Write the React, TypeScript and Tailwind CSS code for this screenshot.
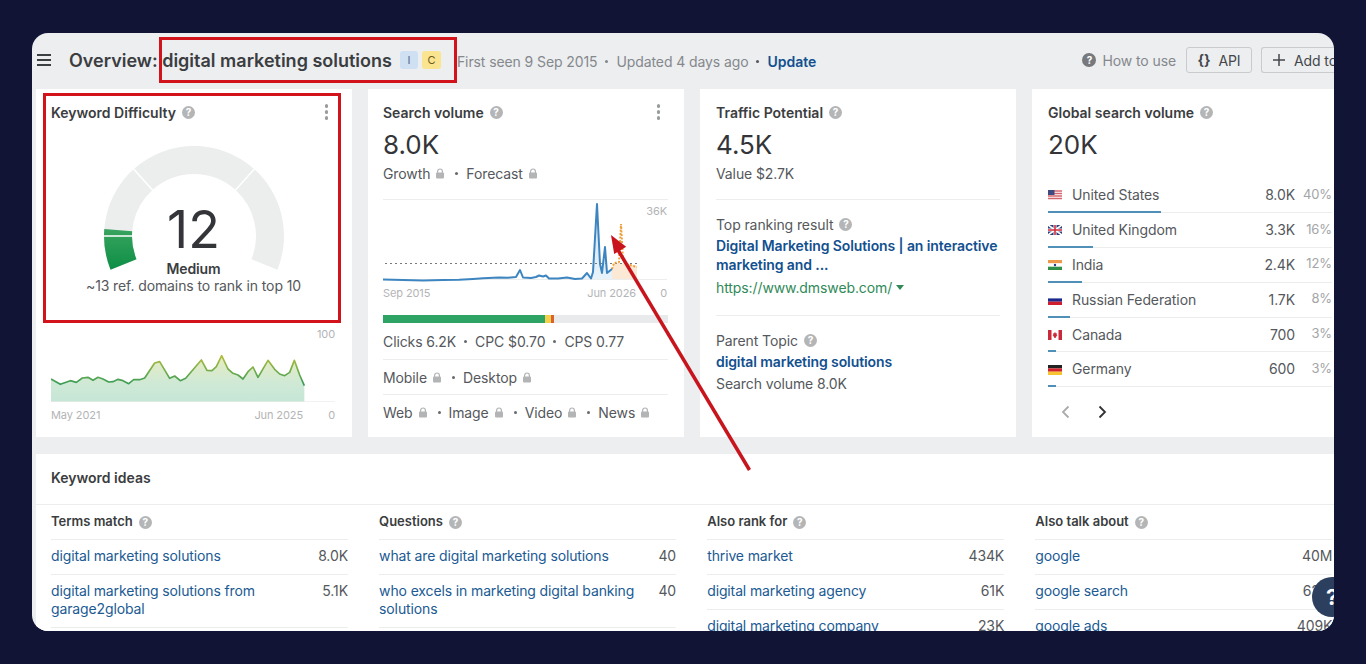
import React from "react";

const pol = (r: number, a: number, cx = 100, cy = 113) => {
  const t = (a * Math.PI) / 180;
  return `${(cx + r * Math.cos(t)).toFixed(2)} ${(cy - r * Math.sin(t)).toFixed(2)}`;
};
const seg = (a1: number, a2: number, R = 90, r = 62) =>
  `M${pol(R, a1)} A${R} ${R} 0 0 1 ${pol(R, a2)} L${pol(r, a2)} A${r} ${r} 0 0 0 ${pol(r, a1)} Z`;

const Help = ({ c = "bg-[#b4b5b6]" }: { c?: string }) => (
  <span className={`ml-[6px] inline-flex h-[13px] w-[13px] shrink-0 items-center justify-center rounded-full ${c} text-[10px] font-bold leading-none text-white`}>?</span>
);

const Lock = () => (
  <svg width="10" height="11" viewBox="0 0 10 11" className="mx-[5px] shrink-0">
    <path d="M2.6 5V3.4a2.4 2.4 0 0 1 4.8 0V5" fill="none" stroke="#b3b4b6" strokeWidth="1.2" />
    <rect x="1" y="4.6" width="8" height="6" rx="1" fill="#b3b4b6" />
  </svg>
);

const Dot = ({ cls = "mx-[8px] bg-[#66696d]" }: { cls?: string }) => <span className={`${cls} h-[3px] w-[3px] shrink-0 rounded-full`} />;

const Dots = () => (
  <span className="ml-auto mr-[8px] flex flex-col gap-[2.500px]">
    <i className="h-[3.500px] w-[3.500px] rounded-full bg-[#9a9b9d]" />
    <i className="h-[3.500px] w-[3.500px] rounded-full bg-[#9a9b9d]" />
    <i className="h-[3.500px] w-[3.500px] rounded-full bg-[#9a9b9d]" />
  </span>
);

const Title = ({ children, menu }: { children: React.ReactNode; menu?: boolean }) => (
  <div className="flex h-5 items-center text-[14px] font-semibold tracking-normal text-[#3b3d40]">
    {children}
    <Help />
    {menu && <Dots />}
  </div>
);

const Big = ({ children }: { children: React.ReactNode }) => (
  <div className="h-[41px] text-[26px] font-normal leading-[46px] tracking-normal text-[#333538]">{children}</div>
);

const flags: Record<string, React.ReactNode> = {
  us: (
    <>
      <rect width="14" height="10" fill="#fff" />
      <path d="M0 1h14M0 3.5h14M0 6h14M0 8.5h14" stroke="#d4656f" strokeWidth="1.3" />
      <rect width="6.5" height="5" fill="#3f4a80" />
    </>
  ),
  uk: (
    <>
      <rect width="14" height="10" fill="#2f3f7c" />
      <path d="M0 0l14 10M14 0L0 10" stroke="#fff" strokeWidth="1.8" />
      <path d="M7 0v10M0 5h14" stroke="#fff" strokeWidth="3" />
      <path d="M7 0v10M0 5h14" stroke="#cf2b3c" strokeWidth="1.6" />
    </>
  ),
  in: (
    <>
      <rect width="14" height="3.4" fill="#ee9a4d" />
      <rect y="3.4" width="14" height="3.3" fill="#fff" />
      <rect y="6.7" width="14" height="3.3" fill="#2f8f46" />
      <circle cx="7" cy="5" r="1.2" fill="#2b3a80" />
    </>
  ),
  ru: (
    <>
      <rect width="14" height="3.4" fill="#fff" />
      <rect y="3.4" width="14" height="3.3" fill="#1d2a8c" />
      <rect y="6.7" width="14" height="3.3" fill="#cf1f2e" />
    </>
  ),
  ca: (
    <>
      <rect width="14" height="10" fill="#fff" />
      <rect width="3.5" height="10" fill="#c92a3a" />
      <rect x="10.5" width="3.5" height="10" fill="#c92a3a" />
      <path d="M7 2l1 1.6 1-.4-.4 2 .9.2L8 6.8v.9H6v-.9L4.500 5.400l.9-.2-.4-2 1 .4z" fill="#c92a3a" />
    </>
  ),
  de: (
    <>
      <rect width="14" height="3.4" fill="#222" />
      <rect y="3.4" width="14" height="3.3" fill="#d3222c" />
      <rect y="6.700" width="14" height="3.3" fill="#f6c531" />
    </>
  ),
};

const countries = [
  { f: "us", n: "United States", v: "8.0K", p: "40%", b: "w-[113px]" },
  { f: "uk", n: "United Kingdom", v: "3.3K", p: "16%", b: "w-[45px]" },
  { f: "in", n: "India", v: "2.4K", p: "12%", b: "w-[34px]" },
  { f: "ru", n: "Russian Federation", v: "1.7K", p: "8%", b: "w-[22px]" },
  { f: "ca", n: "Canada", v: "700", p: "3%", b: "w-[8px]" },
  { f: "de", n: "Germany", v: "600", p: "3%", b: "w-[8px]" },
];

const kdPts =
  "64,177 92,193 122,182 140,187 158,174 175,172 190,181 205,172 220,177 237,186 250,185 265,178 280,182 297,191 312,179 330,179 345,174 375,129 390,125 420,175 435,168 452,182 468,175 515,120 532,151 547,152 560,140 576,107 595,147 610,160 625,165 640,177 655,155 670,141 685,172 715,121 735,148 750,162 765,167 780,157 794,121 810,165 824,197";

const svPts =
  "0,79.500 20,80 40,80.500 60,80 76,79.800 90,79 100,78.300 116,77.500 125,77.800 133,77 137,70 140,77.500 148,78 153,77 156,75.500 160,76.500 163,75.500 166,78.500 175,78.500 184,77.500 192,79 199,78.500 204,73 208,78.500 210,72 214,4 217,64 219,73 222,47 224,73 229,69";

const ideas = [
  {
    h: "Terms match",
    rows: [
      ["digital marketing solutions", "8.0K"],
      ["digital marketing solutions from garage2global", "5.1K"],
    ],
  },
  {
    h: "Questions",
    rows: [
      ["what are digital marketing solutions", "40"],
      ["who excels in marketing digital banking solutions", "40"],
    ],
  },
  {
    h: "Also rank for",
    rows: [
      ["thrive market", "434K"],
      ["digital marketing agency", "61K"],
      ["digital marketing company", "23K"],
    ],
  },
  {
    h: "Also talk about",
    rows: [
      ["google", "40M"],
      ["google search", "62M"],
      ["google ads", "409K"],
    ],
  },
];

export default function App() {
  return (
    <div className="h-[664px] w-[1366px] overflow-hidden bg-[#121436] px-[32px] pt-[33px] font-['Inter',sans-serif] text-[14px] tracking-[-0.1px] text-[#55585c]">
      <div className="relative h-[598px] w-[1302px] overflow-hidden rounded-[16px] bg-[#eceef0]">
        {/* header */}
        <div className="flex h-[56px] items-center whitespace-nowrap pb-[2px] pl-[5px]">
          <svg width="14" height="12" viewBox="0 0 14 12" className="shrink-0">
            <path d="M0 1h14M0 6h14M0 11h14" stroke="#3d4043" strokeWidth="2" />
          </svg>
          <span className="ml-[18px] text-[18px] font-semibold tracking-normal text-[#3b3d40]">Overview: digital marketing solutions</span>
          <span className="ml-[8px] flex h-[18px] w-[18px] items-center justify-center rounded-[3px] bg-[#cfe0f2] text-[11px] text-[#4a6a8c]">I</span>
          <span className="ml-[4px] flex h-[18px] w-[19px] items-center justify-center rounded-[3px] bg-[#fbe48f] text-[11px] text-[#6b5a1c]">C</span>
          <span className="ml-[16px] mt-[2px] text-[#85888c]">First seen 9 Sep 2015</span>
          <Dot cls="mx-[8px] mt-[2px] bg-[#85888c]" />
          <span className="mt-[2px] text-[#85888c]">Updated 4 days ago</span>
          <Dot cls="mx-[8px] mt-[2px] bg-[#55585c]" />
          <span className="mt-[2px] font-semibold tracking-normal text-[#12508f]">Update</span>
          <span className="ml-auto flex items-center">
            <span className="flex h-[14px] w-[14px] items-center justify-center rounded-full bg-[#77797c] text-[10px] font-bold text-white">?</span>
            <span className="ml-[6px] text-[#85888c]">How to use</span>
            <span className="ml-[10px] flex h-[26px] w-[66px] items-center justify-center gap-[8px] rounded-[3px] border border-[#c9cbce] text-[#44474a]">
              <span className="font-bold leading-none">{"{}"}</span>API
            </span>
            <span className="ml-[9px] flex h-[26px] w-[73px] items-center overflow-hidden rounded-l-[3px] border-y border-l border-[#c9cbce] pl-[11px] text-[#44474a]">
              <svg width="12" height="12" viewBox="0 0 12 12" className="mr-[9px] shrink-0">
                <path d="M6 0v12M0 6h12" stroke="#44474a" strokeWidth="1.500" />
              </svg>
              Add to
            </span>
          </span>
        </div>

        {/* metric cards */}
        <div className="flex gap-4 pl-[4px]">
          {/* KD */}
          <div className="h-[348px] w-[316px] shrink-0 bg-white pl-[15px] pr-[16px] pt-[13px]">
            <Title menu>Keyword Difficulty</Title>
            <div className="relative h-[207px]">
              <svg width="200" height="150" viewBox="0 0 200 150" className="mx-auto mt-[1px] block">
                <defs>
                  <linearGradient id="kdg" x1="0" y1="0" x2="0" y2="1">
                    <stop offset="0" stopColor="#38a35f" />
                    <stop offset="1" stopColor="#0d8f45" />
                  </linearGradient>
                </defs>
                <path d={seg(202, 132)} fill="#eceded" />
                <path d={seg(132, 48)} fill="#eceded" />
                <path d={seg(48, -22)} fill="#eceded" />
                <path d={seg(202, 175.5)} fill="url(#kdg)" />
                <path d={`M${pol(92, 180)} L${pol(60, 180)}`} stroke="#fff" strokeWidth="1.500" />
                <path d={`M${pol(92, 132)} L${pol(60, 132)}`} stroke="#fff" strokeWidth="1.500" />
                <path d={`M${pol(92, 48)} L${pol(60, 48)}`} stroke="#fff" strokeWidth="1.500" />
              </svg>
              <div className="absolute inset-x-0 top-[76px] flex flex-col items-center">
                <span className="text-[52px] font-normal leading-[62px] tracking-normal text-[#333538]">12</span>
                <span className="font-semibold leading-[15px] text-[#3b3d40]">Medium</span>
                <span className="leading-[19px] text-[#55585c]">~13 ref. domains to rank in top 10</span>
              </div>
            </div>
            <div className="relative h-[72px] w-[284px]">
              <svg width="284" height="72" viewBox="64 30 852 216" className="block">
                <defs>
                  <linearGradient id="kdl" gradientUnits="userSpaceOnUse" x1="0" y1="105" x2="0" y2="200">
                    <stop offset="0" stopColor="#b7bf3d" />
                    <stop offset="1" stopColor="#2e9a5a" />
                  </linearGradient>
                  <linearGradient id="kdf" gradientUnits="userSpaceOnUse" x1="0" y1="105" x2="0" y2="245">
                    <stop offset="0" stopColor="#e9edc0" />
                    <stop offset="0.6" stopColor="#cfe9d6" />
                    <stop offset="1" stopColor="#c6e6d6" />
                  </linearGradient>
                </defs>
                <polygon points={`64,245 ${kdPts} 824,245`} fill="url(#kdf)" />
                <polyline points={kdPts} fill="none" stroke="url(#kdl)" strokeWidth="5" strokeLinejoin="round" />
                <path d="M64 245H916" stroke="#e8e9ea" strokeWidth="2" />
              </svg>
              <span className="absolute right-0 top-[-3px] text-[11px] leading-[14px] text-[#b3b4b6]">100</span>
            </div>
            <div className="mt-[6px] flex w-[284px] text-[11px] leading-[14px] text-[#b3b4b6]">
              <span>May 2021</span>
              <span className="ml-auto">Jun 2025</span>
              <span className="w-[32px] text-right">0</span>
            </div>
          </div>

          {/* Search volume */}
          <div className="h-[348px] w-[316px] shrink-0 bg-white pl-[15px] pr-[16px] pt-[13px]">
            <Title menu>Search volume</Title>
            <Big>8.0K</Big>
            <div className="flex h-5 items-center">
              Growth<Lock /><Dot cls="mx-[5px] bg-[#66696d]" /><span className="ml-[3px]">Forecast</span><Lock />
            </div>
            <div className="relative mt-[16px] h-[81px] w-[285px] border-t border-[#eceded]">
              <svg width="285" height="80" viewBox="0 0 285 80" className="block overflow-visible">
                <defs>
                  <linearGradient id="svf" x1="0" y1="0" x2="0" y2="1">
                    <stop offset="0" stopColor="#cfe4f5" />
                    <stop offset="1" stopColor="#e8f2fa" />
                  </linearGradient>
                </defs>
                <polygon points="200,79 204,74 208,79 210,73 214,4 217,64 219,73 222,47 224,73 229,69 229,79" fill="url(#svf)" />
                <polygon points="229,79 229,69 231,63 238,63 254,66 254,79" fill="#fbe9d5" />
                <path d="M0 79.500H284" stroke="#eceded" />
                <path d="M2 63.500H254" stroke="#77797c" strokeDasharray="2 3" />
                <polyline points="229,69 231,63 236,62 238,24 240,60 243,64 254,67" fill="none" stroke="#eda13c" strokeWidth="2" strokeDasharray="2 1.500" />
                <polyline points={svPts} fill="none" stroke="#3d85c0" strokeWidth="2" strokeLinejoin="round" />
              </svg>
              <span className="absolute right-[1px] top-[4px] text-[11px] leading-[14px] text-[#b3b4b6]">36K</span>
            </div>
            <div className="mt-[6px] flex w-[284px] text-[11px] leading-[14px] text-[#b3b4b6]">
              <span>Sep 2015</span>
              <span className="ml-auto">Jun 2026</span>
              <span className="w-[31px] text-right">0</span>
            </div>
            <div className="mt-[15px] flex h-[8px] w-[285px] bg-[#e9eaeb]">
              <div className="w-[162px] bg-[#2ea464]" />
              <div className="w-[6px] bg-[#f5cf4e]" />
              <div className="w-[3px] bg-[#d9622b]" />
            </div>
            <div className="flex h-[37px] w-[285px] items-center border-b border-[#eceded] pt-[1px]">
              Clicks 6.2K<Dot />CPC $0.70<Dot />CPS 0.77
            </div>
            <div className="flex h-[35px] w-[285px] items-center border-b border-[#eceded]">
              Mobile<Lock /><Dot cls="mx-[5px] bg-[#66696d]" /><span className="ml-[3px]">Desktop</span><Lock />
            </div>
            <div className="flex h-[35px] items-center">
              Web<Lock /><Dot cls="mx-[5px] bg-[#66696d]" /><span className="ml-[3px]">Image</span><Lock /><Dot cls="mx-[5px] bg-[#66696d]" /><span className="ml-[3px]">Video</span><Lock /><Dot cls="mx-[5px] bg-[#66696d]" /><span className="ml-[3px]">News</span><Lock />
            </div>
          </div>

          {/* Traffic potential */}
          <div className="h-[348px] w-[316px] shrink-0 bg-white pl-[16px] pr-[16px] pt-[13px]">
            <Title>Traffic Potential</Title>
            <Big>4.5K</Big>
            <div className="flex h-5 items-center">Value $2.7K</div>
            <div className="mt-[16px] border-t border-[#eceded] pt-[14px]">
              <div className="flex h-5 items-center">Top ranking result<Help /></div>
              <div className="mt-[2px] w-[290px] font-semibold leading-[19px] text-[#12508f]">
                Digital Marketing Solutions | an interactive marketing and ...
              </div>
              <div className="mt-[3px] flex h-5 items-center text-[#2f8a58]">
                https://www.dmsweb.com/
                <svg width="8" height="5" viewBox="0 0 8 5" className="ml-[4px]"><path d="M0 0h8L4 5z" fill="#2f8a58" /></svg>
              </div>
            </div>
            <div className="mt-[18px] border-t border-[#eceded] pt-[14px]">
              <div className="flex h-5 items-center">Parent Topic<Help /></div>
              <div className="mt-[1px] flex h-5 items-center font-semibold text-[#12508f]">digital marketing solutions</div>
              <div className="mt-[2px] flex h-5 items-center">Search volume 8.0K</div>
            </div>
          </div>

          {/* Global */}
          <div className="h-[348px] w-[316px] shrink-0 bg-white pl-[16px] pr-[16px] pt-[13px]">
            <Title>Global search volume</Title>
            <Big>20K</Big>
            <div className="mt-[15px] w-[284px]">
              {countries.map((c) => (
                <div key={c.f} className="relative flex h-[34.900px] items-center border-b border-[#eceded] pb-[1px]">
                  <svg width="14" height="10" viewBox="0 0 14 10" className="mr-[10px] mt-[2px] shrink-0">{flags[c.f]}</svg>
                  <span>{c.n}</span>
                  <span className="ml-auto">{c.v}</span>
                  <span className="w-[37px] text-right text-[13px] text-[#a3a5a7]">{c.p}</span>
                  <span className={`absolute bottom-[-1px] left-0 h-[2px] ${c.b} bg-[#4f8fb8]`} />
                </div>
              ))}
            </div>
            <div className="flex h-[50px] items-center pl-[13px]">
              <svg width="9" height="14" viewBox="0 0 9 14"><path d="M7.500 1.500L2 7l5.500 5.500" fill="none" stroke="#a9abad" strokeWidth="1.800" /></svg>
              <svg width="9" height="14" viewBox="0 0 9 14" className="ml-[28px]"><path d="M1.500 1.500L7 7l-5.500 5.500" fill="none" stroke="#2f3133" strokeWidth="1.800" /></svg>
            </div>
          </div>
        </div>

        {/* keyword ideas */}
        <div className="ml-[4px] mt-[17px] h-[200px] w-[1316px] bg-white">
          <div className="flex h-[51px] items-center border-b border-[#eceded] pb-[3px] pl-[15px] font-semibold tracking-normal text-[#3b3d40]">Keyword ideas</div>
          <div className="flex gap-[31.100px] pl-[15px]">
            {ideas.map((col) => (
              <div key={col.h} className="w-[297px] shrink-0">
                <div className="flex h-[35px] items-center border-b border-[#eceded] text-[13px] font-semibold tracking-normal text-[#3b3d40]">
                  {col.h}
                  <Help />
                </div>
                {col.rows.map(([a, b]) => (
                  <div key={a} className="flex items-start justify-between border-b border-[#eceded] pb-[9px] pt-[7px] leading-[18px]">
                    <span className="max-w-[262px] tracking-[-0.13px] text-[#205a93]">{a}</span>
                    <span className="text-[#55585c]">{b}</span>
                  </div>
                ))}
              </div>
            ))}
          </div>
        </div>

        {/* help bubble */}
        <div className="absolute left-[1280px] top-[544px] flex h-[40px] w-[40px] items-center justify-center rounded-full bg-[#2c3f5e] text-[22px] font-bold text-white">?</div>

        {/* annotations */}
        <div className="absolute left-[127px] top-[4px] h-[46px] w-[298px] border-[3px] border-[#d3131c]" />
        <div className="absolute left-[11px] top-[60px] h-[230px] w-[298px] border-[3px] border-[#d3131c]" />
        <svg width="1302" height="598" viewBox="0 0 1302 598" className="pointer-events-none absolute left-0 top-0">
          <path d="M717.500 437L586 217" stroke="#c8141c" strokeWidth="3.500" />
          <path d="M579 202L582.200 221L594.200 213.800Z" fill="#c8141c" />
        </svg>
      </div>
    </div>
  );
}
